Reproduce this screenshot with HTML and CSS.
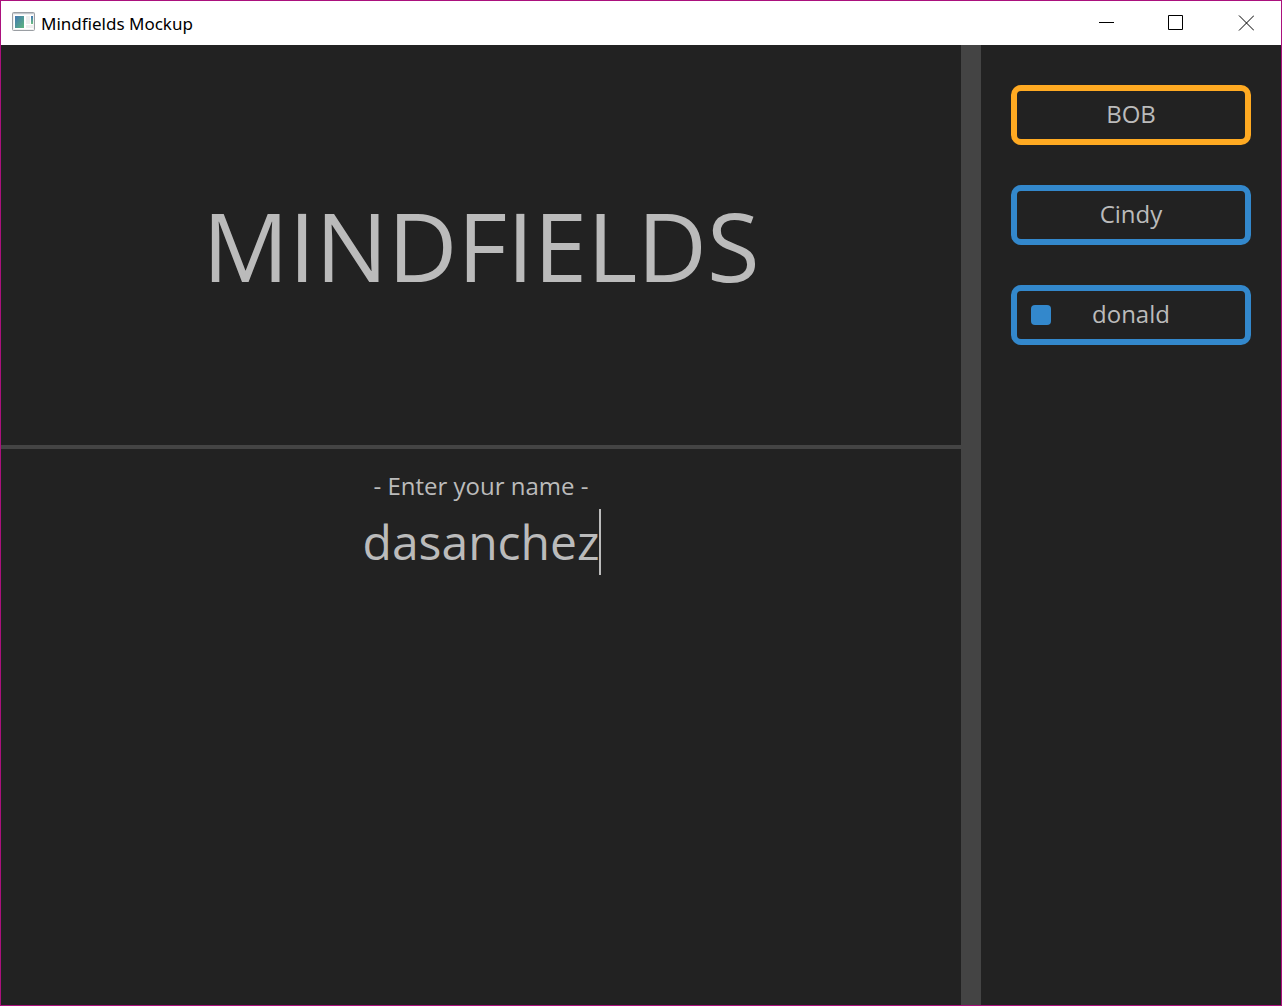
FILE: index.html
```html
<!DOCTYPE html>
<html lang="en">
<head>
<meta charset="utf-8">
<title>Mindfields Mockup</title>
<link rel="stylesheet" href="styles.css">
</head>
<body>
<div class="window">
  <header class="titlebar">
    <svg class="app-icon" width="24" height="20" viewBox="0 0 24 20" aria-hidden="true">
      <defs>
        <linearGradient id="screen" x1="0" y1="0" x2="1" y2="1"><stop offset="0" stop-color="#4478b4"/><stop offset="1" stop-color="#5cb57c"/></linearGradient>
        <linearGradient id="strip" x1="0" y1="0" x2="0" y2="1"><stop offset="0" stop-color="#4478b4"/><stop offset="1" stop-color="#6cbf80"/></linearGradient>
      </defs>
      <rect x="0.5" y="0.5" width="22" height="18" rx="1" fill="#f1f1f1" stroke="#9a9ea3"/>
      <path d="M1 1.500h21" stroke="#c3c8ce"/>
      <rect x="2" y="3" width="19" height="14" fill="#fff"/>
      <rect x="3" y="4" width="9" height="12" fill="url(#screen)"/>
      <rect x="14" y="4" width="4" height="8" fill="#eee"/>
      <rect x="14" y="13" width="7" height="3" fill="#eee"/>
      <rect x="19" y="4" width="2" height="8" fill="url(#strip)"/>
    </svg>
    <span class="app-title">Mindfields Mockup</span>
    <div class="controls">
      <button class="control" type="button" aria-label="Minimize"><svg width="16" height="16" viewBox="0 0 16 16"><path d="M1 7.500h15"/></svg></button>
      <button class="control" type="button" aria-label="Maximize"><svg width="16" height="16" viewBox="0 0 16 16"><path d="M.5.5h14v14H.5z"/></svg></button>
      <button class="control" type="button" aria-label="Close"><svg width="16" height="16" viewBox="0 0 16 16"><path d="M1 .5l15 15m0-15l-15 15"/></svg></button>
    </div>
  </header>
  <div class="content">
    <main class="stage">
      <section class="banner"><h1 class="logo">MINDFIELDS</h1></section>
      <form class="entry">
        <label class="prompt" for="name">- Enter your name -</label>
        <div class="field">
          <input class="name" id="name" type="text" value="dasanchez" autocomplete="off">
          <span class="caret"></span>
        </div>
      </form>
    </main>
    <aside class="sidebar">
      <ul class="players">
        <li class="player active">BOB</li>
        <li class="player">Cindy</li>
        <li class="player"><span class="marker"></span>donald</li>
      </ul>
    </aside>
  </div>
</div>
</body>
</html>
```

FILE: styles.css
```css
* { box-sizing: border-box; }

body {
  margin: 0;
  font-family: "Open Sans", "Noto Sans", sans-serif;
  color: #bbb;
  background: #222;
}

.window {
  display: flex;
  flex-direction: column;
  min-height: 100vh;
  border: 1px solid #ab117d;
}

.titlebar {
  display: flex;
  align-items: center;
  height: 44px;
  padding-left: 11px;
  background: #fff;
  color: #000;
}

.app-icon { margin-bottom: 2px; }

.app-title {
  margin-left: 5px;
  font-family: "Noto Sans", "Open Sans", sans-serif;
  font-size: 17px;
}

.controls {
  display: flex;
  align-self: stretch;
  margin-left: auto;
}

.control {
  display: grid;
  place-items: center;
  width: 70px;
  padding: 0;
  border: 0;
  background: none;
}

.control svg {
  fill: none;
  stroke: #000;
}

.content {
  display: flex;
  flex: 1;
}

.stage {
  display: flex;
  flex: 1;
  flex-direction: column;
}

.banner {
  display: grid;
  place-items: center;
  height: 404px;
  border-bottom: 4px solid #444;
}

.logo {
  margin: 0;
  font-size: 96px;
  font-weight: 400;
  line-height: 130px;
}

.entry {
  display: flex;
  flex-direction: column;
  align-items: center;
  padding-top: 20px;
}

.prompt {
  font-size: 24px;
  line-height: 34px;
}

.field {
  position: relative;
  display: flex;
  margin-top: 6px;
}

.name {
  field-sizing: content;
  padding: 0;
  border: 0;
  outline: 0;
  background: none;
  color: inherit;
  font: 48px/66px "Open Sans", "Noto Sans", sans-serif;
}

.caret {
  position: absolute;
  top: 0;
  left: 100%;
  width: 2px;
  height: 66px;
  background: #bbb;
}

.sidebar {
  width: 320px;
  padding: 40px 30px;
  border-left: 20px solid #444;
}

.players {
  display: grid;
  gap: 40px;
  margin: 0;
  padding: 0;
  list-style: none;
}

.player {
  position: relative;
  height: 60px;
  border: 6px solid #3388cc;
  border-radius: 10px;
  font-size: 24px;
  line-height: 46px;
  text-align: center;
}

.player.active { border-color: #ffaa22; }

.marker {
  position: absolute;
  top: 14px;
  left: 14px;
  width: 20px;
  height: 20px;
  border-radius: 4px;
  background: #3388cc;
}
```
